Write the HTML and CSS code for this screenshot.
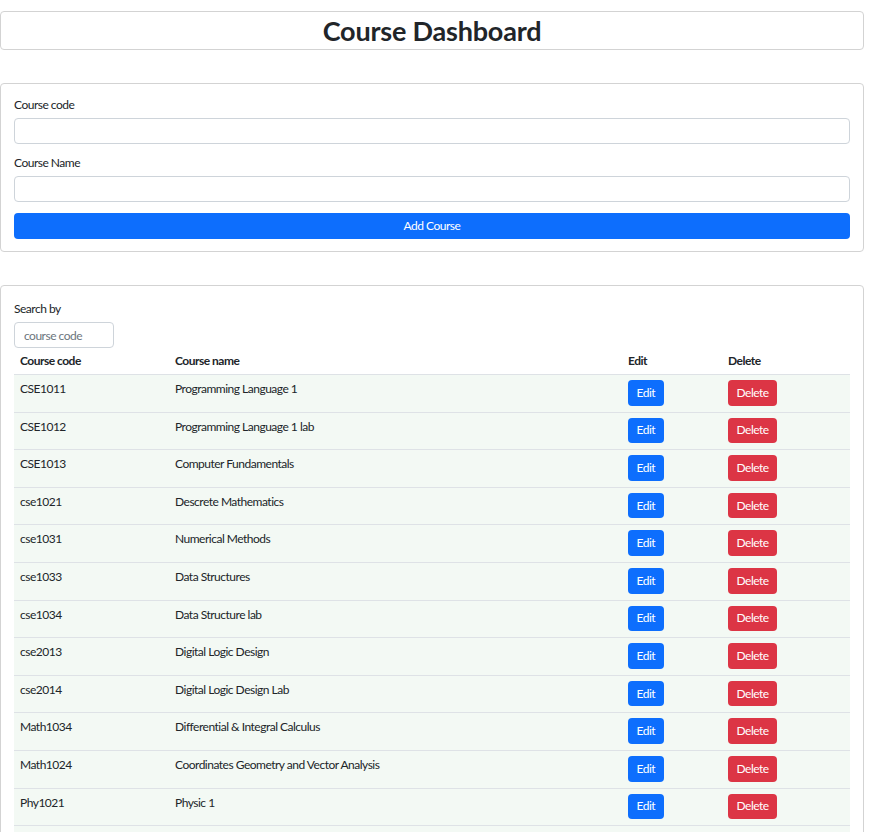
FILE: index.html
```html
<!DOCTYPE html>
<html lang="en">
<head>
<meta charset="utf-8">
<title>Course Dashboard</title>
<link rel="stylesheet" href="styles.css">
</head>
<body>
<div class="page">
  <header class="card title-card">
    <h1 class="title">Course Dashboard</h1>
  </header>

  <section class="card form-card">
    <label class="label" for="code">Course code</label>
    <input class="input" id="code" type="text">
    <label class="label label-gap" for="name">Course Name</label>
    <input class="input" id="name" type="text">
    <button class="btn btn-primary btn-block" type="button">Add Course</button>
  </section>

  <section class="card table-card">
    <label class="label" for="search">Search by</label>
    <input class="input search" id="search" type="text" placeholder="course code">
    <table class="table">
      <colgroup>
        <col class="c-code"><col class="c-name"><col class="c-edit"><col class="c-del">
      </colgroup>
      <thead>
        <tr><th>Course code</th><th>Course name</th><th>Edit</th><th>Delete</th></tr>
      </thead>
      <tbody>
        <tr><td>CSE1011</td><td>Programming Language 1</td><td><button class="btn btn-primary">Edit</button></td><td><button class="btn btn-danger">Delete</button></td></tr>
        <tr><td>CSE1012</td><td>Programming Language 1 lab</td><td><button class="btn btn-primary">Edit</button></td><td><button class="btn btn-danger">Delete</button></td></tr>
        <tr><td>CSE1013</td><td>Computer Fundamentals</td><td><button class="btn btn-primary">Edit</button></td><td><button class="btn btn-danger">Delete</button></td></tr>
        <tr><td>cse1021</td><td>Descrete Mathematics</td><td><button class="btn btn-primary">Edit</button></td><td><button class="btn btn-danger">Delete</button></td></tr>
        <tr><td>cse1031</td><td>Numerical Methods</td><td><button class="btn btn-primary">Edit</button></td><td><button class="btn btn-danger">Delete</button></td></tr>
        <tr><td>cse1033</td><td>Data Structures</td><td><button class="btn btn-primary">Edit</button></td><td><button class="btn btn-danger">Delete</button></td></tr>
        <tr><td>cse1034</td><td>Data Structure lab</td><td><button class="btn btn-primary">Edit</button></td><td><button class="btn btn-danger">Delete</button></td></tr>
        <tr><td>cse2013</td><td>Digital Logic Design</td><td><button class="btn btn-primary">Edit</button></td><td><button class="btn btn-danger">Delete</button></td></tr>
        <tr><td>cse2014</td><td>Digital Logic Design Lab</td><td><button class="btn btn-primary">Edit</button></td><td><button class="btn btn-danger">Delete</button></td></tr>
        <tr><td>Math1034</td><td>Differential &amp; Integral Calculus</td><td><button class="btn btn-primary">Edit</button></td><td><button class="btn btn-danger">Delete</button></td></tr>
        <tr><td>Math1024</td><td>Coordinates Geometry and Vector Analysis</td><td><button class="btn btn-primary">Edit</button></td><td><button class="btn btn-danger">Delete</button></td></tr>
        <tr><td>Phy1021</td><td>Physic 1</td><td><button class="btn btn-primary">Edit</button></td><td><button class="btn btn-danger">Delete</button></td></tr>
        <tr class="row-empty"><td></td><td></td><td></td><td></td></tr>
      </tbody>
    </table>
  </section>
</div>
</body>
</html>
```

FILE: styles.css
```css
* { box-sizing: border-box; }

html, body {
  margin: 0;
  padding: 0;
  background: #fff;
}

body {
  font-family: Lato, "Liberation Sans", sans-serif;
  font-size: 12px;
  line-height: 18px;
  letter-spacing: -0.5px;
  color: #212529;
}

.page {
  width: 864px;
  padding-top: 11px;
  display: flex;
  flex-direction: column;
  gap: 33px;
}

.card {
  border: 1px solid #d3d3d3;
  border-radius: 4px;
  background: #fff;
}

.title-card {
  height: 39px;
  display: flex;
  align-items: center;
  justify-content: center;
}

.title {
  margin: 0;
  font-size: 27px;
  line-height: 34px;
  font-weight: 700;
  letter-spacing: -0.2px;
  color: #212529;
}

.form-card {
  padding: 12px 13px 12px 13px;
  display: flex;
  flex-direction: column;
}

.label {
  display: block;
  margin-bottom: 4px;
}

.label-gap {
  margin-top: 10px;
}

.input {
  display: block;
  width: 100%;
  height: 26px;
  border: 1px solid #ced4da;
  border-radius: 4px;
  padding: 2px 9px;
  font: inherit;
  letter-spacing: inherit;
  color: #212529;
  background: #fff;
}

.input::placeholder {
  color: #6c757d;
}

.btn {
  display: inline-block;
  border: 0;
  border-radius: 4px;
  font: inherit;
  letter-spacing: inherit;
  line-height: 18px;
  height: 25.6px;
  padding: 3.8px 8.5px;
  color: #fff;
  cursor: pointer;
}

.btn-primary { background: #0d6efd; }
.btn-danger { background: #dc3545; }

.btn-block {
  width: 100%;
  margin-top: 11px;
  height: 26px;
  padding: 4px 9px;
}

.table-card {
  padding: 14px 13px 0 13px;
  height: 560px;
}

.search {
  width: 100px;
  margin-bottom: 0;
}

.table {
  width: 100%;
  border-collapse: collapse;
  table-layout: fixed;
}

.c-code { width: 155px; }
.c-name { width: 453px; }
.c-edit { width: 100px; }
.c-del { width: 128px; }

.table th {
  text-align: left;
  font-weight: 700;
  padding: 4px 6px 4px 6px;
  border-bottom: 1px solid #dee2e6;
}

.table td {
  vertical-align: top;
  padding: 5px 6px 6px 6px;
  background: #f3f9f4;
  border-bottom: 1px solid #dee2e6;
}

.row-empty td {
  height: 37px;
}
```
